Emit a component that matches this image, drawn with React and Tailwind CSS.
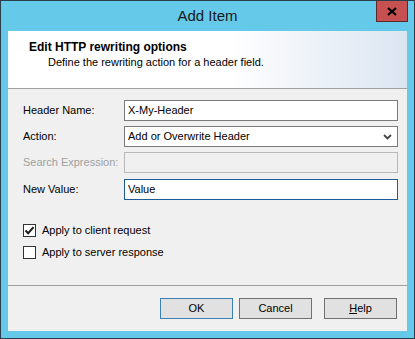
import React from 'react';

const font = { fontFamily: '"Liberation Sans", Arial, sans-serif' };

function Row({ label, disabled, children }) {
  return (
    <div className="flex items-center h-[21px]">
      <label className={`w-[101px] pl-[15px] box-content whitespace-nowrap text-[11px] ${disabled ? 'text-[#a0a0a0]' : 'text-black'}`}>
        {label}
      </label>
      {children}
    </div>
  );
}

function Check({ checked, label }) {
  return (
    <div className="flex items-center h-[13px] pl-[15px]">
      <div className="w-[13px] h-[13px] border border-[#333] bg-white flex items-center justify-center">
        {checked && (
          <svg width="11" height="11" viewBox="0 0 11 11">
            <path d="M1.5 5.5 L4.2 8.2 L9.5 2.2" stroke="#1a1a1a" strokeWidth="2" fill="none" />
          </svg>
        )}
      </div>
      <span className="ml-[6px] text-[11px] text-black">{label}</span>
    </div>
  );
}

function Button({ primary, className = '', children }) {
  return (
    <button
      className={`block w-[73px] h-[21px] text-[11px] text-black bg-[#e1e1e1] border ${
        primary ? 'border-[#3c7fb1]' : 'border-[#707070]'
      } ${className}`}
    >
      {children}
    </button>
  );
}

export default function App() {
  return (
    <div className="w-[415px] h-[339px] bg-[#65c9ea] border border-[#2a3d4b] relative" style={font}>
      <div className="h-[30px] flex items-center justify-center text-[15px] text-[#1a1a1a]">
        Add Item
      </div>
      <button className="absolute top-0 right-[6px] w-[32px] h-[21px] bg-[#c75050] border border-[#5a2a2a] border-t-0 flex items-center justify-center">
        <svg width="10" height="9" viewBox="0 0 10 9">
          <path d="M1 1 L9 8 M9 1 L1 8" stroke="#000" strokeWidth="2.2" />
        </svg>
      </button>

      <div className="mx-[7px] w-[399px] h-[300px] bg-[#f0f0f0] flex flex-col">
        <div className="h-[58px] border-b border-[#a0a0a0] bg-gradient-to-r from-white from-55% to-[#dbe5f1] pt-[9px]">
          <div className="pl-[21px] text-[12px] font-bold leading-[15px] text-black">Edit HTTP rewriting options</div>
          <div className="pl-[40px] text-[11px] leading-[15px] text-black">Define the rewriting action for a header field.</div>
        </div>

        <div className="flex flex-col gap-[5px] pt-[11px]">
          <Row label="Header Name:">
            <div className="w-[274px] h-[21px] border border-[#7a7a7a] bg-white flex items-center px-[3px] text-[11px]">
              X-My-Header
            </div>
          </Row>
          <Row label="Action:">
            <div className="w-[274px] h-[21px] border border-[#7a7a7a] bg-white flex items-center justify-between px-[3px] text-[11px]">
              <span>Add or Overwrite Header</span>
              <svg width="9" height="6" viewBox="0 0 9 6" className="mr-[2px]">
                <path d="M1 1 L4.5 4.5 L8 1" stroke="#444" strokeWidth="1.8" fill="none" />
              </svg>
            </div>
          </Row>
          <Row label="Search Expression:" disabled>
            <div className="w-[274px] h-[21px] border border-[#b9b9b9] bg-[#f0f0f0]" />
          </Row>
          <div className="mt-[1px]">
            <Row label="New Value:">
              <div className="w-[274px] h-[21px] border border-[#1d5c97] bg-white flex items-center px-[3px] text-[11px]">
                Value
              </div>
            </Row>
          </div>
        </div>

        <div className="flex flex-col gap-[9px] mt-[24px]">
          <Check checked label="Apply to client request" />
          <Check label="Apply to server response" />
        </div>

        <div className="mt-auto h-[46px] border-t border-[#a0a0a0] flex justify-end items-start gap-[6px] pt-[12px] pr-[10px]">
          <Button primary>OK</Button>
          <Button>Cancel</Button>
          <Button className="ml-[6px]">
            <span className="underline">H</span>elp
          </Button>
        </div>
      </div>
    </div>
  );
}
